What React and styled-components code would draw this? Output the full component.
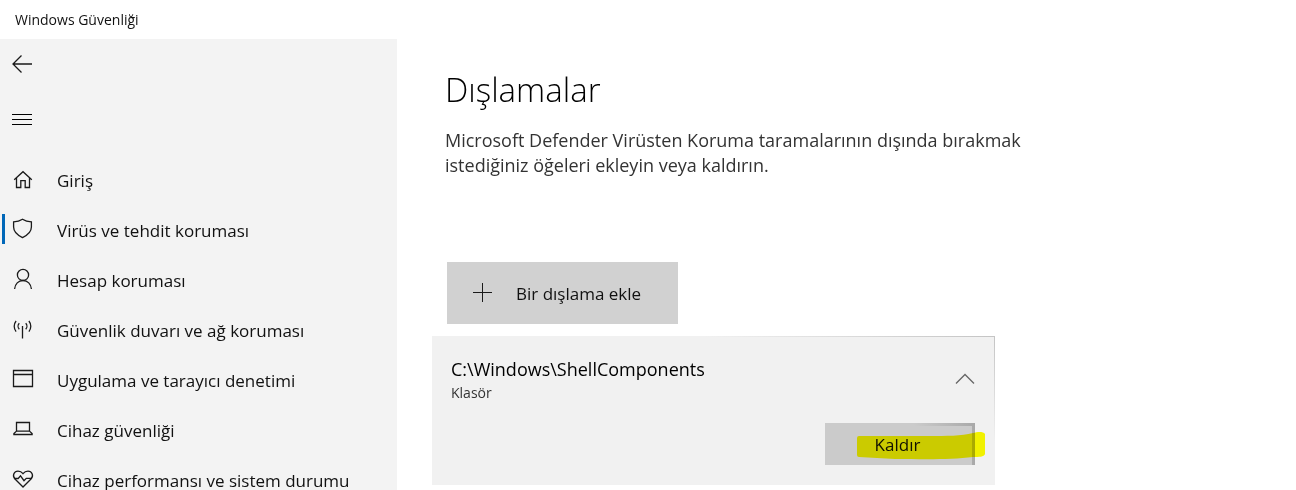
import React from "react";
import styled, { createGlobalStyle } from "styled-components";

const GlobalStyle = createGlobalStyle`
  *, *::before, *::after { box-sizing: border-box; }
  body {
    margin: 0;
    background: #fff;
    color: #111;
    font-family: "Segoe UI", "Open Sans", "Noto Sans", sans-serif;
    font-size: 17px;
  }
  button { font: inherit; color: inherit; border: 0; cursor: pointer; }
  h1, h2, p, ul { margin: 0; padding: 0; }
`;

const Window = styled.div`
  display: flex;
  flex-direction: column;
  height: 100vh;
  overflow: hidden;
`;

const TitleBar = styled.header`
  flex: none;
  height: 39px;
  padding: 0 15px;
  font-size: 14px;
  line-height: 39px;
`;

const Body = styled.div`
  display: flex;
  flex: 1;
  min-height: 0;
`;

const Sidebar = styled.aside`
  flex: none;
  width: 397px;
  overflow: hidden;
  background: #f3f3f3;
`;

const IconButton = styled.button`
  display: flex;
  align-items: center;
  width: 48px;
  height: 50px;
  margin-bottom: 5px;
  padding: 0 0 0 10px;
  background: transparent;
`;

const NavList = styled.ul`
  list-style: none;
  padding-top: 5px;
`;

const NavLink = styled.a`
  display: flex;
  align-items: center;
  height: 50px;
  padding-left: 2px;
  color: #111;
  line-height: 24px;
  text-decoration: none;
  white-space: nowrap;

  &::before {
    content: "";
    width: 3px;
    height: 30px;
    margin-right: 6px;
    background: ${(p) => (p.$active ? "#0067b8" : "transparent")};
  }
`;

const NavText = styled.span`
  padding: 4px 0 0 22px;
`;

const Glyph = styled.svg`
  flex: none;
  display: block;
  width: ${(p) => p.$size || 24}px;
  height: ${(p) => p.$size || 24}px;
  fill: none;
  stroke: ${(p) => p.$color || "#1a1a1a"};
  stroke-width: ${(p) => p.$weight || 1.3};
`;

const Main = styled.main`
  flex: 1;
  min-width: 0;
  padding: 27px 35px 0;
`;

const Intro = styled.div`
  max-width: 600px;
  padding-left: 13px;
`;

const Title = styled.h1`
  color: #000;
  font-size: 33px;
  font-weight: 300;
  line-height: 48px;
`;

const Description = styled.p`
  padding-top: 14px;
  color: #333;
  font-size: 18px;
  line-height: 25px;
`;

const AddButton = styled.button`
  display: flex;
  align-items: center;
  gap: 21px;
  width: 231px;
  height: 62px;
  margin: 84px 0 12px 15px;
  padding: 0 0 0 24px;
  background: #d1d1d1;
`;

const Card = styled.section`
  max-width: 563px;
  height: 149px;
  padding: 20px 19px 20px 19px;
  background: #f1f1f1;
  border: 1px solid;
  border-width: 1px 1px 0 0;
  border-image: linear-gradient(200deg, #c4c4c4, #f1f1f1 30%) 1;
`;

const CardHeader = styled.div`
  display: flex;
  align-items: flex-start;
  justify-content: space-between;
`;

const ItemPath = styled.h2`
  color: #000;
  font-size: 18px;
  font-weight: 400;
  line-height: 24px;
`;

const ItemKind = styled.p`
  color: #333;
  font-size: 14px;
  line-height: 24px;
`;

const Toggle = styled.button`
  display: flex;
  padding: 12px 0 0;
  background: transparent;
`;

const Actions = styled.div`
  display: flex;
  justify-content: flex-end;
  padding-top: 18px;
`;

const RemoveButton = styled.button`
  position: relative;
  width: 150px;
  height: 42px;
  padding: 0 5px 0 0;
  background: #cbcbcb;

  &::before {
    content: "";
    position: absolute;
    inset: 0;
    border-top: 3px solid;
    border-right: 3px solid;
    border-image: linear-gradient(90deg, #cbcbcb 60%, #a9a9a9) 3;
  }
`;

const Marker = styled.svg`
  position: absolute;
  top: 9px;
  left: 32px;
  width: 128px;
  height: 28px;
  fill: #ffff00;
  mix-blend-mode: multiply;
  pointer-events: none;
`;

const icons = {
  home: (
    <path d="M3.200 12.700 12 4.700l8.800 8M5.500 11v9.500h4.300v-6.800h4.400v6.800h4.300V11" />
  ),
  shield: (
    <path d="M11.500 2.200c-2.600 1.700-5.400 2.500-8.900 2.700v5.200c0 4.900 3.900 8.200 8.900 10.500 5-2.300 8.900-5.600 8.900-10.500V4.900c-3.500-.2-6.300-1-8.900-2.700Z" />
  ),
  person: (
    <>
      <circle cx="12" cy="7.900" r="5.600" />
      <path d="M3.600 22c.4-5 3.800-8.500 8.400-8.500s8 3.500 8.400 8.500" />
    </>
  ),
  antenna: (
    <>
      <path d="M11.500 9v12.500" />
      <path d="M8.300 6.300a4.300 4.300 0 0 0 0 6M14.700 6.300a4.300 4.300 0 0 1 0 6M5.100 4a8.500 8.500 0 0 0 0 10.700M17.900 4a8.500 8.500 0 0 1 0 10.700" />
    </>
  ),
  window: <path d="M2.500 3.500h19v16h-19zM2.500 7.500h19" />,
  laptop: (
    <path d="M5.500 5.500h13v8.600h-13zM5.500 14.100l-2.600 2.500v.9h18.200v-.9l-2.600-2.500" />
  ),
  heart: (
    <>
      <path d="M12 20 4 12C.8 8.500 3.200 4.200 7 4.200c2.200 0 3.800 1 5 2.500 1.200-1.500 2.800-2.500 5-2.500 3.800 0 6.200 4.300 3 7.800Z" />
      <path d="M3.500 11.500h3.700l2.300-2.600 3.500 4.800 2.300-2.300h5.200" />
    </>
  ),
};

const navItems = [
  { icon: "home", label: "Giriş" },
  { icon: "shield", label: "Virüs ve tehdit koruması", active: true },
  { icon: "person", label: "Hesap koruması" },
  { icon: "antenna", label: "Güvenlik duvarı ve ağ koruması" },
  { icon: "window", label: "Uygulama ve tarayıcı denetimi" },
  { icon: "laptop", label: "Cihaz güvenliği" },
  { icon: "heart", label: "Cihaz performansı ve sistem durumu" },
];

export default function App() {
  return (
    <Window>
      <GlobalStyle />
      <TitleBar>Windows Güvenliği</TitleBar>
      <Body>
        <Sidebar>
          <IconButton aria-label="Geri">
            <Glyph viewBox="0 0 24 24" aria-hidden="true">
              <path d="M22 12H3M11.500 3.500 3 12l8.500 8.500" />
            </Glyph>
          </IconButton>
          <IconButton aria-label="Menü">
            <Glyph viewBox="0 0 24 24" $weight={1} $color="#000" aria-hidden="true">
              <path d="M2 7.500h20M2 12.500h20M2 17.500h20" />
            </Glyph>
          </IconButton>
          <nav>
            <NavList>
              {navItems.map((item) => (
                <li key={item.icon}>
                  <NavLink
                    href="#"
                    $active={item.active}
                    aria-current={item.active ? "page" : undefined}
                  >
                    <Glyph viewBox="0 0 24 24" aria-hidden="true">
                      {icons[item.icon]}
                    </Glyph>
                    <NavText>{item.label}</NavText>
                  </NavLink>
                </li>
              ))}
            </NavList>
          </nav>
        </Sidebar>
        <Main>
          <Intro>
            <Title>Dışlamalar</Title>
            <Description>
              Microsoft Defender Virüsten Koruma taramalarının dışında bırakmak
              istediğiniz öğeleri ekleyin veya kaldırın.
            </Description>
          </Intro>
          <AddButton>
            <Glyph viewBox="0 0 24 24" $weight={1} aria-hidden="true">
              <path d="M2 11.500h19M11.500 2v19" />
            </Glyph>
            Bir dışlama ekle
          </AddButton>
          <Card>
            <CardHeader>
              <div>
                <ItemPath>C:\Windows\ShellComponents</ItemPath>
                <ItemKind>Klasör</ItemKind>
              </div>
              <Toggle aria-label="Daralt" aria-expanded="true">
                <Glyph
                  viewBox="0 0 20 20"
                  $size={20}
                  $color="#666"
                  aria-hidden="true"
                >
                  <path d="M1 14.500 10 5.500l9 9" />
                </Glyph>
              </Toggle>
            </CardHeader>
            <Actions>
              <RemoveButton>
                Kaldır
                <Marker viewBox="0 0 128 28" aria-hidden="true">
                  <path d="M2 4h70c18 0 32 0 44-3 4-1 10-2 12 1v20c-1 3-6 3-12 3-22 3-52 2-78 2L2 25q-2 0-2-2V6q0-2 2-2Z" />
                </Marker>
              </RemoveButton>
            </Actions>
          </Card>
        </Main>
      </Body>
    </Window>
  );
}
